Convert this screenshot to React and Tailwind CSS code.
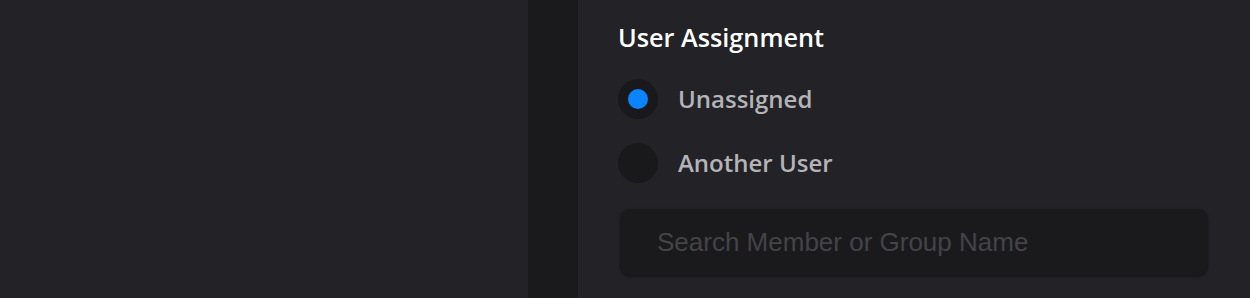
import React, { useState } from "react";

const Radio = ({ checked, label, onClick }) => (
  <button
    type="button"
    onClick={onClick}
    className="flex items-center gap-[20px] h-[40px] text-left"
  >
    <span className="w-[40px] h-[40px] rounded-full bg-[#19191b] flex items-center justify-center">
      {checked && <span className="w-[20px] h-[20px] rounded-full bg-[#0a84ff]" />}
    </span>
    <span className="text-[24px] font-semibold text-[#b4b4b8] leading-none">{label}</span>
  </button>
);

export default function App() {
  const [value, setValue] = useState("unassigned");

  return (
    <div
      className="flex w-full h-[298px] bg-[#222227] overflow-hidden"
      style={{ fontFamily: '"Open Sans", sans-serif' }}
    >
      {/* Left panel */}
      <div className="w-[528px] shrink-0 bg-[#222227]" />

      {/* Divider */}
      <div className="w-[50px] shrink-0 bg-[#1a1a1c]" />

      {/* Right panel */}
      <div className="flex-1 px-[42px] pt-[21px]">
        <h2 className="text-[25.25px] leading-[32px] font-semibold text-white -ml-[2px]">User Assignment</h2>

        <div className="mt-[26px] flex flex-col gap-[24px] -ml-[2px]">
          <Radio
            label="Unassigned"
            checked={value === "unassigned"}
            onClick={() => setValue("unassigned")}
          />
          <Radio
            label="Another User"
            checked={value === "another"}
            onClick={() => setValue("another")}
          />
        </div>

        <input
          type="text"
          placeholder="Search Member or Group Name"
          className="mt-[26px] w-full h-[67px] rounded-[10px] bg-[#1a1a1c] pl-[37px] pr-4 text-[26px] text-[#b4b4b8] placeholder:text-[#434348] outline-none shadow-[0_1px_3px_rgba(0,0,0,0.35)]"
          style={{ fontFamily: '"Liberation Sans", Arial, sans-serif' }}
        />
      </div>
    </div>
  );
}
